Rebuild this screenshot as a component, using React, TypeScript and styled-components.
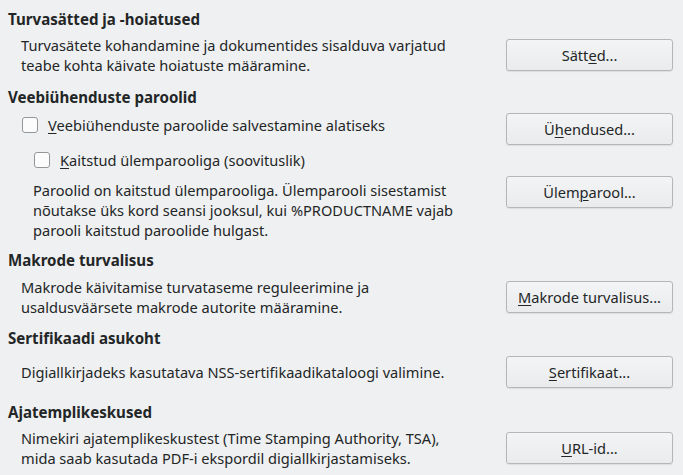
import React from 'react'
import styled, { createGlobalStyle } from 'styled-components'

const GlobalStyle = createGlobalStyle`
  html, body {
    margin: 0;
    padding: 0;
    background: #eff0f1;
  }
  body {
    font-family: 'Noto Sans', 'Open Sans', sans-serif;
    font-size: 14.6px;
    color: #232627;
  }
`

const Page = styled.div`
  width: 683px;
  height: 475px;
  box-sizing: border-box;
  padding: 9px 10px 0 8px;
  overflow: hidden;
`

const Heading = styled.h3<{ $gap?: number }>`
  margin: ${(p) => p.$gap ?? 0}px 0 0;
  font-size: 15.1px;
  font-weight: 700;
  line-height: 20px;
`

const Row = styled.div<{ $gap?: number; $align?: string }>`
  display: grid;
  grid-template-columns: 1fr 167px;
  align-items: ${(p) => p.$align ?? 'center'};
  margin-top: ${(p) => p.$gap ?? 6}px;
`

const Text = styled.p<{ $indent?: number; $top?: number }>`
  margin: 0;
  padding: ${(p) => p.$top ?? 0}px 0 0 ${(p) => p.$indent ?? 13}px;
  line-height: 20px;
  white-space: nowrap;
`

const CheckRow = styled.label<{ $indent: number; $top?: number }>`
  display: flex;
  align-items: center;
  gap: 10px;
  padding: ${(p) => p.$top ?? 0}px 0 0 ${(p) => p.$indent}px;
  line-height: 20px;
`

const Box = styled.span`
  width: 14px;
  height: 14px;
  border: 1px solid #959697;
  border-radius: 3px;
  background: #fcfcfc;
  flex: none;
`

const Button = styled.button`
  height: 32px;
  width: 167px;
  box-sizing: border-box;
  border: 1px solid #b5b6b7;
  border-radius: 3px;
  background: linear-gradient(#f3f4f5, #eaebec);
  box-shadow: 0 1px 1px rgba(0, 0, 0, 0.08);
  font-family: inherit;
  font-size: 14.6px;
  color: #232627;
  padding: 0 6px;
  white-space: nowrap;

  u {
    text-decoration-thickness: 1px;
    text-underline-offset: 2px;
  }
`

const Mn = styled.u`
  text-decoration-thickness: 1px;
  text-underline-offset: 2px;
`

export default function App() {
  return (
    <Page>
      <GlobalStyle />
      <Heading>Turvasätted ja -hoiatused</Heading>
      <Row>
        <Text>
          Turvasätete kohandamine ja dokumentides sisalduva varjatud
          <br />
          teabe kohta käivate hoiatuste määramine.
        </Text>
        <Button>
          Sätt<u>e</u>d...
        </Button>
      </Row>

      <Heading $gap={12}>Veebiühenduste paroolid</Heading>
      <Row $align="start">
        <CheckRow $indent={14} $top={2}>
          <Box />
          <span>
            <Mn>V</Mn>eebiühenduste paroolide salvestamine alatiseks
          </span>
        </CheckRow>
        <Button>
          Ü<u>h</u>endused...
        </Button>
      </Row>
      <CheckRow $indent={26} $top={5}>
        <Box />
        <span>
          <Mn>K</Mn>aitstud ülemparooliga (soovituslik)
        </span>
      </CheckRow>
      <Row $align="start">
        <Text $indent={25} $top={4}>
          Paroolid on kaitstud ülemparooliga. Ülemparooli sisestamist
          <br />
          nõutakse üks kord seansi jooksul, kui %PRODUCTNAME vajab
          <br />
          parooli kaitstud paroolide hulgast.
        </Text>
        <Button>
          Ülem<u>p</u>arool...
        </Button>
      </Row>

      <Heading $gap={10}>Makrode turvalisus</Heading>
      <Row $gap={7}>
        <Text>
          Makrode käivitamise turvataseme reguleerimine ja
          <br />
          usaldusväärsete makrode autorite määramine.
        </Text>
        <Button>
          <u>M</u>akrode turvalisus...
        </Button>
      </Row>

      <Heading $gap={11}>Sertifikaadi asukoht</Heading>
      <Row $gap={8}>
        <Text>Digiallkirjadeks kasutatava NSS-sertifikaadikataloogi valimine.</Text>
        <Button>
          <u>S</u>ertifikaat...
        </Button>
      </Row>

      <Heading $gap={14}>Ajatemplikeskused</Heading>
      <Row>
        <Text>
          Nimekiri ajatemplikeskustest (Time Stamping Authority, TSA),
          <br />
          mida saab kasutada PDF-i ekspordil digiallkirjastamiseks.
        </Text>
        <Button>
          <u>U</u>RL-id...
        </Button>
      </Row>
    </Page>
  )
}
